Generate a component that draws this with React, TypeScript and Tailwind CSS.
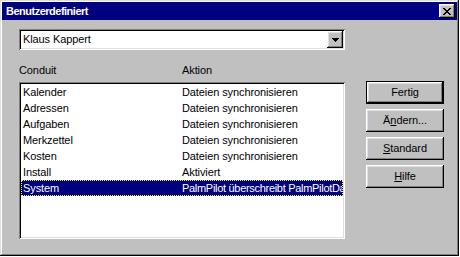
import React from "react";

const rows = [
  { conduit: "Kalender", aktion: "Dateien synchronisieren" },
  { conduit: "Adressen", aktion: "Dateien synchronisieren" },
  { conduit: "Aufgaben", aktion: "Dateien synchronisieren" },
  { conduit: "Merkzettel", aktion: "Dateien synchronisieren" },
  { conduit: "Kosten", aktion: "Dateien synchronisieren" },
  { conduit: "Install", aktion: "Aktiviert" },
  { conduit: "System", aktion: "PalmPilot überschreibt PalmPilotDaten" },
];

const raised =
  "shadow-[inset_-1px_-1px_#000,inset_1px_1px_#fff,inset_-2px_-2px_#808080,inset_2px_2px_#dfdfdf]";
const sunken =
  "shadow-[inset_1px_1px_#808080,inset_-1px_-1px_#fff,inset_2px_2px_#000,inset_-2px_-2px_#dfdfdf]";

function Btn({ children, isDefault }: { children: React.ReactNode; isDefault?: boolean }) {
  return (
    <div className={`h-[23px] w-[78px] bg-[#c0c0c0] ${isDefault ? "border border-black" : ""}`}>
      <div className={`flex h-full w-full items-center justify-center text-black ${raised}`}>
        {children}
      </div>
    </div>
  );
}

export default function App() {
  return (
    <div
      className="h-[257px] w-[460px] bg-white text-[11px] leading-[13px] tracking-[-0.1px] text-black"
      style={{ fontFamily: '"Liberation Sans", Arial, sans-serif' }}
    >
      {/* Dialog window */}
      <div className="flex h-[256px] w-[459px] flex-col bg-[#c0c0c0] p-[2px] shadow-[inset_-1px_-1px_#000,inset_1px_1px_#dfdfdf,inset_-2px_-2px_#808080,inset_2px_2px_#fff]">
        {/* Title bar */}
        <div className="flex h-[18px] items-center justify-between bg-[#000080] pl-[4px] pr-[2px]">
          <span className="font-bold tracking-[-0.5px] text-white">Benutzerdefiniert</span>
          <div className={`flex h-[14px] w-[16px] items-center justify-center bg-[#c0c0c0] ${raised}`}>
            <svg width="8" height="7" viewBox="0 0 8 7" shapeRendering="crispEdges">
              <path d="M0 0h2v1h-2zM6 0h2v1h-2zM1 1h2v1h-2zM5 1h2v1h-2zM2 2h4v1h-4zM3 3h2v1h-2zM2 4h4v1h-4zM1 5h2v1h-2zM5 5h2v1h-2zM0 6h2v1h-2zM6 6h2v1h-2z" fill="#000" />
            </svg>
          </div>
        </div>

        <div className="flex pl-[17px]">
          {/* Left column */}
          <div className="flex w-[326px] flex-col">
            {/* Combo box */}
            <div className={`mt-[9px] flex h-[21px] items-center justify-between bg-white pl-[4px] pr-[2px] ${sunken}`}>
              <span>Klaus Kappert</span>
              <div className={`flex h-[17px] w-[16px] items-center justify-center bg-[#c0c0c0] ${raised}`}>
                <svg width="7" height="4" viewBox="0 0 7 4" shapeRendering="crispEdges">
                  <path d="M0 0h7v1h-7zM1 1h5v1h-5zM2 2h3v1h-3zM3 3h1v1h-1z" fill="#000" />
                </svg>
              </div>
            </div>

            {/* Column headers */}
            <div className="mt-[14px] flex h-[13px]">
              <span className="w-[163px]">Conduit</span>
              <span>Aktion</span>
            </div>

            {/* List */}
            <div className={`mt-[5px] h-[157px] bg-white p-[2px] ${sunken}`}>
              {rows.map((r, i) => {
                const selected = i === rows.length - 1;
                return (
                  <div
                    key={r.conduit}
                    className={`flex h-[16px] items-center overflow-hidden whitespace-nowrap ${
                      selected
                        ? "border border-dotted border-[#ffff00] bg-[#000080] pl-[1px] text-white"
                        : "pl-[2px]"
                    }`}
                  >
                    <span className="w-[159px] shrink-0">{r.conduit}</span>
                    <span className={selected ? "tracking-[-0.3px]" : ""}>{r.aktion}</span>
                  </div>
                );
              })}
            </div>
          </div>

          {/* Buttons */}
          <div className="ml-[21px] mt-[61px] flex flex-col gap-[5px]">
            <Btn isDefault>Fertig</Btn>
            <Btn>
              <span>
                Ä<span className="underline">n</span>dern...
              </span>
            </Btn>
            <Btn>
              <span>
                <span className="underline">S</span>tandard
              </span>
            </Btn>
            <Btn>
              <span>
                <span className="underline">H</span>ilfe
              </span>
            </Btn>
          </div>
        </div>
      </div>
    </div>
  );
}
